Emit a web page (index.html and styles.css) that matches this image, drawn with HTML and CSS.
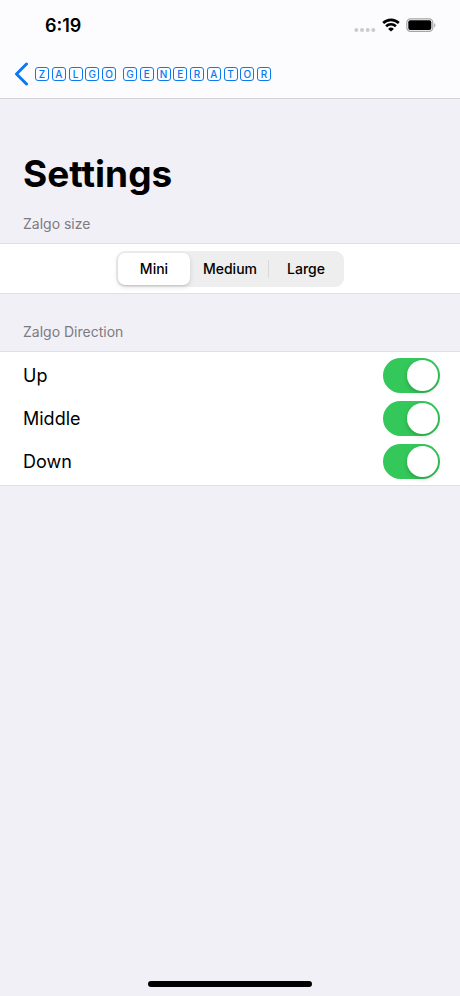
FILE: index.html
```html
<!DOCTYPE html>
<html lang="en">
<head>
<meta charset="utf-8">
<meta name="viewport" content="width=device-width, initial-scale=1">
<title>Settings</title>
<link rel="stylesheet" href="styles.css">
</head>
<body>
<header class="topbar">
  <div class="status">
    <time class="clock">6:19</time>
    <div class="indicators">
      <svg class="signal" viewBox="0 0 22 4" aria-hidden="true">
        <circle cx="2.3" cy="2" r="2"/><circle cx="8" cy="2" r="2"/><circle cx="13.7" cy="2" r="2"/><circle cx="19.3" cy="2" r="2"/>
      </svg>
      <svg class="wifi" viewBox="0 0 18 14" aria-hidden="true">
        <path d="M1.2 5a11.200 11.200 0 0 1 15.600 0M4.100 8.200a7.100 7.100 0 0 1 9.800 0" fill="none" stroke="#000" stroke-width="2.600"/>
        <path d="M9 13.600 6.100 10.900a4.300 4.300 0 0 1 5.800 0z"/>
      </svg>
      <svg class="battery" viewBox="0 0 30 14" aria-hidden="true">
        <rect x=".8" y=".8" width="26" height="12.6" rx="3.8" fill="none" stroke="#a5a5a7" stroke-width="1.2"/>
        <rect x="2.3" y="2.3" width="23" height="9.6" rx="2"/>
        <path d="M28.2 5v4.4c1.7-.7 1.7-3.7 0-4.4z" fill="#a5a5a7"/>
      </svg>
    </div>
  </div>
  <nav class="nav">
    <a class="back" href="#" aria-label="Zalgo Generator">
      <svg class="chevron" viewBox="0 0 14 24" aria-hidden="true"><path d="M12.500 2 2.500 12 12.500 22"/></svg>
      <span class="word word-short"><span>Z</span><span>A</span><span>L</span><span>G</span><span>O</span></span>
      <span class="word word-long"><span>G</span><span>E</span><span>N</span><span>E</span><span>R</span><span>A</span><span>T</span><span>O</span><span>R</span></span>
    </a>
  </nav>
</header>
<main class="content">
  <h1 class="title">Settings</h1>
  <h2 class="section-label" id="size-label">Zalgo size</h2>
  <div class="group size-group" role="radiogroup" aria-labelledby="size-label">
    <div class="segments">
      <label class="segment"><input type="radio" name="size" checked><span>Mini</span></label>
      <label class="segment"><input type="radio" name="size"><span>Medium</span></label>
      <label class="segment divided"><input type="radio" name="size"><span>Large</span></label>
    </div>
  </div>
  <h2 class="section-label direction-label">Zalgo Direction</h2>
  <div class="group">
    <div class="row"><label for="up">Up</label><input class="switch" id="up" type="checkbox" role="switch" checked></div>
    <div class="row"><label for="middle">Middle</label><input class="switch" id="middle" type="checkbox" role="switch" checked></div>
    <div class="row"><label for="down">Down</label><input class="switch" id="down" type="checkbox" role="switch" checked></div>
  </div>
</main>
<footer class="home"><div class="home-bar"></div></footer>
</body>
</html>
```
FILE: styles.css
```css
* { box-sizing: border-box; }
body {
  margin: 0;
  min-height: 100vh;
  display: flex;
  flex-direction: column;
  background: #f1f0f6;
  color: #000;
  font-family: Inter, "Liberation Sans", sans-serif;
}
.topbar {
  background: #fcfcfe;
  border-bottom: 1px solid #d4d4d8;
}
.status {
  display: flex;
  align-items: center;
  justify-content: space-between;
  height: 50px;
  padding: 0 24px 0 45px;
}
.clock {
  padding-top: 2px;
  font-size: 18px;
  font-weight: 600;
  line-height: 24px;
}
.indicators {
  display: flex;
  align-items: center;
  gap: 6px;
}
.signal { width: 22px; height: 4px; margin-top: 10px; fill: #cbcbcd; }
.wifi { width: 18px; height: 14px; }
.battery { width: 30px; height: 14px; }
.nav {
  height: 48px;
  padding: 0 14px;
  display: flex;
  align-items: center;
}
.back {
  display: flex;
  align-items: center;
  gap: 7px;
  color: #0a7aee;
  text-decoration: none;
}
.chevron {
  width: 14px;
  height: 24px;
  fill: none;
  stroke: #0a7aee;
  stroke-width: 3;
  stroke-linecap: round;
  stroke-linejoin: round;
}
.word { display: flex; justify-content: space-between; }
.word-short { width: 81px; }
.word-long { width: 148px; }
.word span {
  width: 14px;
  height: 14px;
  border: 1px solid;
  border-radius: 3px;
  font-size: 10px;
  font-weight: 500;
  line-height: 12px;
  text-align: center;
}
.content { flex: 1; }
.title {
  margin: 0;
  padding: 51px 23px 0;
  font-size: 37px;
  font-weight: 700;
  line-height: 48px;
}
.section-label {
  margin: 0;
  padding: 16px 23px 9px;
  color: #7c7b80;
  font-size: 14px;
  font-weight: 400;
  line-height: 20px;
}
.direction-label { padding-top: 28px; }
.group {
  padding: 2px 20px 2px 23px;
  background: #fff;
  border: solid #e0e0e3;
  border-width: 1px 0;
}
.size-group {
  display: flex;
  justify-content: center;
  padding: 7px 20px 6px;
}
.segments {
  display: grid;
  grid-template-columns: repeat(3, 76px);
  height: 36px;
  background: #eee;
  border-radius: 9px;
}
.segment {
  position: relative;
  display: flex;
  padding: 2px;
}
.segment input {
  position: absolute;
  inset: 0;
  margin: 0;
  opacity: 0;
}
.segment span {
  flex: 1;
  border-radius: 7px;
  font-size: 14px;
  font-weight: 500;
  line-height: 32px;
  text-align: center;
}
.segment input:checked + span {
  background: #fff;
  box-shadow: 0 2px 5px #0002, 0 1px 1px #0001;
}
.divided::before {
  content: "";
  position: absolute;
  left: 0;
  top: 9px;
  bottom: 9px;
  width: 1px;
  background: #d9d9db;
}
.row {
  display: flex;
  align-items: center;
  justify-content: space-between;
  height: 43px;
  font-size: 18px;
  line-height: 24px;
}
.switch {
  appearance: none;
  width: 57px;
  height: 35px;
  margin: 0;
  padding: 2px;
  display: flex;
  border-radius: 18px;
  background: #d9d9db;
}
.switch::before {
  content: "";
  width: 31px;
  height: 31px;
  border-radius: 50%;
  background: #fff;
  box-shadow: 0 2px 4px #0003;
}
.switch:checked {
  justify-content: flex-end;
  background: #34c759;
}
.home {
  display: flex;
  justify-content: center;
  padding-bottom: 9px;
}
.home-bar {
  width: 164px;
  height: 6px;
  border-radius: 3px;
  background: #000;
}
```
